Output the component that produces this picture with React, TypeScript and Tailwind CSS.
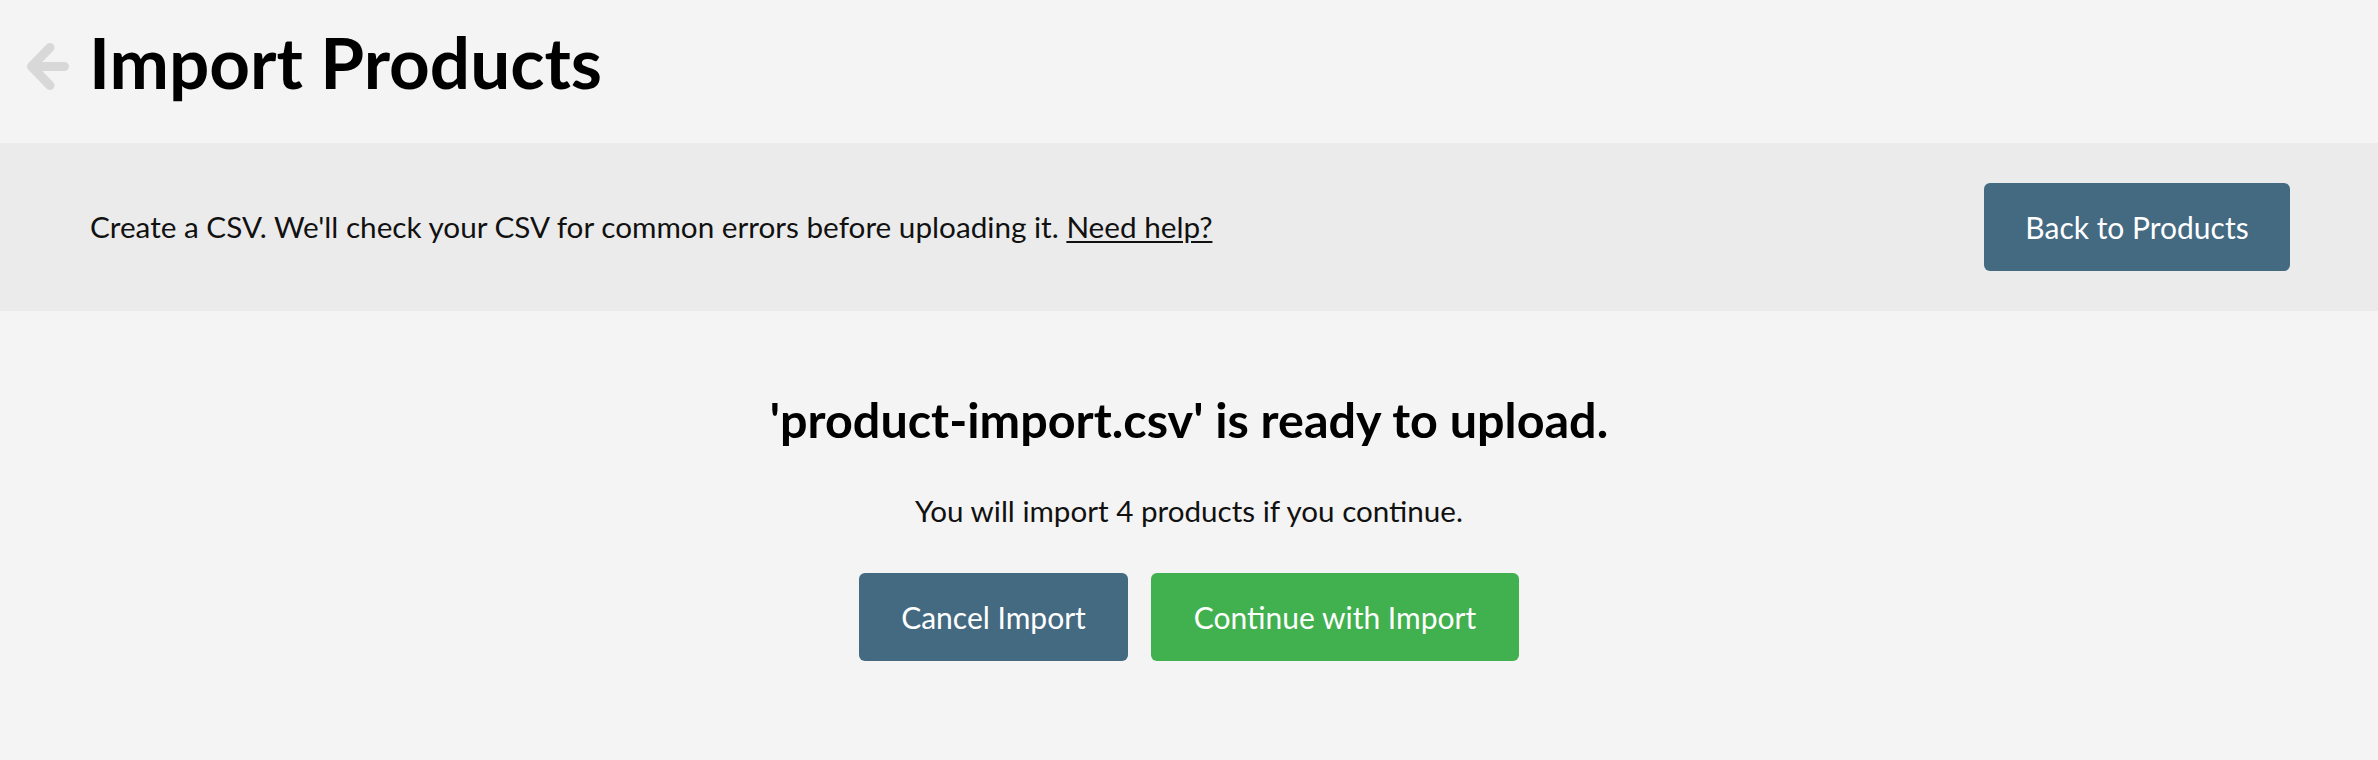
export default function App() {
  return (
    <main
      className="min-h-[760px] w-full bg-[#f4f4f4] text-[#111]"
      style={{ fontFamily: "Lato, 'Open Sans', sans-serif" }}
    >
      <header className="flex h-[143px] items-start pl-[27px] pt-[26px]">
        <button className="mt-[17px] flex h-[47px] w-[42px] items-center justify-center">
          <svg
            width="42"
            height="47"
            viewBox="0 0 42 47"
            fill="none"
            stroke="#d8d8d8"
            strokeWidth="9"
            strokeLinecap="round"
            strokeLinejoin="round"
          >
            <path d="M23 4.5 L4.5 23.5 L23 42.5 M4.5 23.5 H37.5" />
          </svg>
        </button>
        <h1 className="ml-[20px] text-[71px] font-bold leading-none text-black">
          Import Products
        </h1>
      </header>

      <section className="flex h-[168px] items-center justify-between bg-[#ebebeb] pl-[90px] pr-[88px]">
        <p className="text-[29.7px] leading-none">
          Create a CSV. We'll check your CSV for common errors before uploading it.{" "}
          <a href="#" className="underline underline-offset-[3px]">
            Need help?
          </a>
        </p>
        <button className="flex h-[88px] w-[306px] items-center justify-center rounded-[6px] bg-[#446a82] text-[30px] text-white">
          Back to Products
        </button>
      </section>

      <section className="flex flex-col items-center pt-[84px]">
        <h2 className="text-[48.5px] font-bold leading-none text-black">
          'product-import.csv' is ready to upload.
        </h2>
        <p className="mt-[52px] text-[29.6px] leading-none">
          You will import 4 products if you continue.
        </p>
        <div className="mt-[48px] flex gap-[23px]">
          <button className="flex h-[88px] w-[269px] items-center justify-center rounded-[6px] bg-[#446a82] text-[30px] text-white">
            Cancel Import
          </button>
          <button className="flex h-[88px] w-[368px] items-center justify-center rounded-[6px] bg-[#41b04e] text-[30px] text-white">
            Continue with Import
          </button>
        </div>
      </section>
    </main>
  );
}
